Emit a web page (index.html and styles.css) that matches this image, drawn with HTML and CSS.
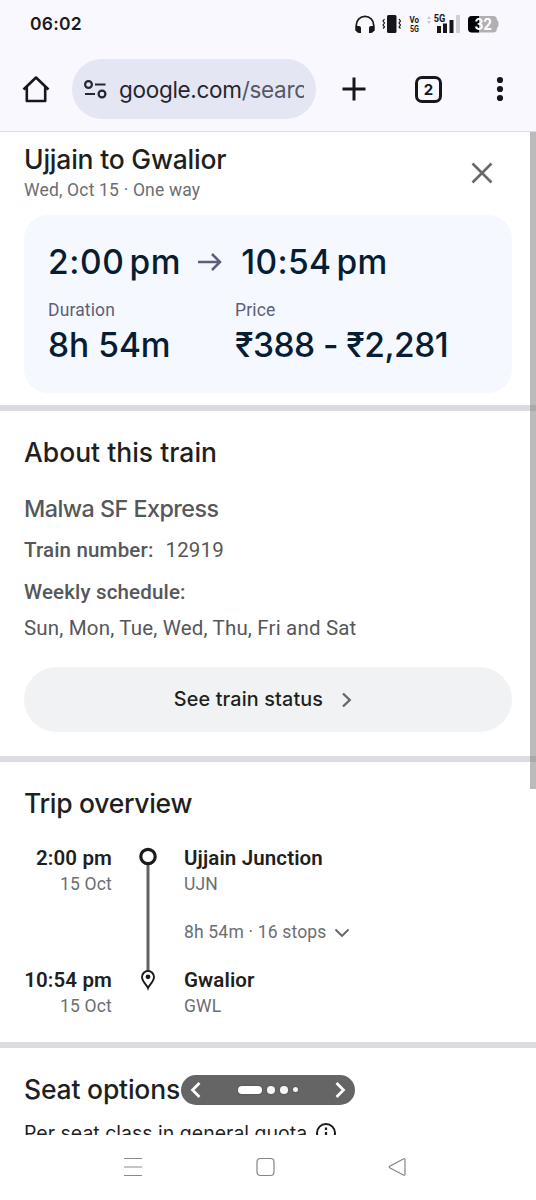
FILE: index.html
```html
<!DOCTYPE html>
<html lang="en">
<head>
<meta charset="utf-8">
<title>Ujjain to Gwalior</title>
<link rel="stylesheet" href="styles.css">
</head>
<body>
<div class="screen">
  <header class="chrome">
    <div class="status">
      <span class="clock">06:02</span>
      <svg class="status-icons" width="148" height="24" viewBox="0 0 148 24">
        <path d="M2.300 19v-6a8.700 8.700 0 0 1 17.400 0v6" fill="none" stroke="#16171b" stroke-width="1.700"/>
        <path d="M1.600 14H5q2 0 2 2v5H5q-3.400-1-3.400-4zM20.400 14H17q-2 0-2 2v5h2q3.400-1 3.400-4z" fill="#16171b"/>
        <rect x="33" y="3" width="9.500" height="18" rx="1.500" fill="#16171b"/>
        <path d="M30.500 7l-1.500 2 1.500 2-1.500 2 1.500 2-1.500 1.500M45 7l1.500 2-1.500 2 1.500 2-1.500 2 1.500 1.500" fill="none" stroke="#16171b" stroke-width="1.200"/>
        <text class="tiny" x="55.500" y="11" textLength="9.500" lengthAdjust="spacingAndGlyphs">Vo</text>
        <text class="tiny" x="56" y="20.300" textLength="9" lengthAdjust="spacingAndGlyphs">5G</text>
        <path d="M73 7l2-3 2 3zM73 9l2 3 2-3z" fill="#c8c7ce"/>
        <text class="tiny net" x="79.800" y="9.500" textLength="11.500" lengthAdjust="spacingAndGlyphs">5G</text>
        <path d="M83 14h4v7h-4zM89 11.500h4V21h-4zM95.500 8h4v13h-4z" fill="#16171b"/>
        <path d="M102 3h4v18h-4z" fill="#cfcfd5"/>
        <path d="M118 4h21q4 0 4 4l1.500 2v4l-1.500 2q0 4.500-4 4.500h-21q-4 0-4-4V8q0-4 4-4z" fill="#b1afb5"/>
        <path d="M125 4h-7q-4 0-4 4v8.500q0 4 4 4h7z" fill="#000"/>
        <text class="battery" x="120.500" y="17.800" textLength="17.500" lengthAdjust="spacingAndGlyphs">32</text>
      </svg>
    </div>
    <div class="toolbar">
      <svg class="home" width="28" height="28" viewBox="0 0 28 28"><path d="M1.500 14.500L14 2.500l12.500 12M4.800 12v14h18.400V12" fill="none" stroke="#16171b" stroke-width="2.600" stroke-linejoin="round"/></svg>
      <div class="address">
        <svg width="24" height="20" viewBox="0 0 24 20" fill="none" stroke="#25262f" stroke-width="2.200"><circle cx="5.500" cy="4.500" r="3.400"/><path d="M12 4.500h10.500M2 14h10"/><circle cx="19" cy="14" r="3.400"/></svg>
        <span class="url">google.com<span class="path">/searc</span></span>
      </div>
      <svg class="plus" width="24" height="24" viewBox="0 0 24 24"><path d="M12 .5v23M.5 12h23" stroke="#16171b" stroke-width="3"/></svg>
      <span class="tabs">2</span>
      <svg class="more" width="8" height="26" viewBox="0 0 8 26" fill="#16171b"><circle cx="4" cy="4" r="3.100"/><circle cx="4" cy="13" r="3.100"/><circle cx="4" cy="22" r="3.100"/></svg>
    </div>
  </header>

  <main class="page">
    <section class="summary">
      <div class="summary-head">
        <div>
          <h1 class="heading route">Ujjain to Gwalior</h1>
          <p class="meta">Wed, Oct 15 · One way</p>
        </div>
        <svg class="close" width="24" height="24" viewBox="0 0 24 24"><path d="M2.500 2.500l19 19M21.500 2.500l-19 19" stroke="#666a6d" stroke-width="2.600"/></svg>
      </div>
      <div class="card">
        <div class="times">
          <span class="big depart">2:00<span class="ampm">pm</span></span>
          <svg width="26" height="20" viewBox="0 0 26 20"><path d="M1 10h22M15 2l8 8-8 8" fill="none" stroke="#5b5d7b" stroke-width="2.500"/></svg>
          <span class="big arrive">10:54<span class="ampm">pm</span></span>
        </div>
        <div class="facts">
          <div><p class="label">Duration</p><p class="big duration">8h 54m</p></div>
          <div><p class="label">Price</p><p class="big price">₹388 - ₹2,281</p></div>
        </div>
      </div>
    </section>

    <section class="about">
      <h2 class="heading">About this train</h2>
      <h3 class="train">Malwa SF Express</h3>
      <p class="detail"><b>Train number:</b><span class="number">12919</span></p>
      <p class="detail"><b>Weekly schedule:</b></p>
      <p class="detail days">Sun, Mon, Tue, Wed, Thu, Fri and Sat</p>
      <div class="button"><span>See train status</span><svg width="12" height="18" viewBox="0 0 12 18"><path d="M2 2.500L8.700 9 2 15.500" fill="none" stroke="#66696c" stroke-width="2.400"/></svg></div>
    </section>

    <section class="trip">
      <h2 class="heading trip-title">Trip overview</h2>
      <div class="journey">
        <div class="when">
          <p class="stop">2:00 pm</p><p class="meta">15 Oct</p>
          <p class="stop second">10:54 pm</p><p class="meta">15 Oct</p>
        </div>
        <svg width="20" height="150" viewBox="0 0 20 150"><path d="M10 20v107" stroke="#626262" stroke-width="3"/><circle cx="10" cy="12.500" r="7.200" fill="#fff" stroke="#1b1b1d" stroke-width="3.200"/><path d="M10 144c-1-3-6-6.500-6-11a6 6 0 0 1 12 0c0 4.500-5 8-6 11z" fill="#fff" stroke="#1b1b1d" stroke-width="1.900"/><circle cx="10" cy="132.800" r="2.400" fill="#1b1b1d"/></svg>
        <div class="where">
          <p class="stop">Ujjain Junction</p><p class="meta">UJN</p>
          <p class="meta stops">8h 54m · 16 stops <svg width="16" height="10" viewBox="0 0 16 10"><path d="M1.500 1.500L8 8l6.500-6.500" fill="none" stroke="#626467" stroke-width="1.900"/></svg></p>
          <p class="stop">Gwalior</p><p class="meta">GWL</p>
        </div>
      </div>
    </section>

    <section class="seats">
      <h2 class="heading seats-title">Seat options</h2>
      <p class="quota">Per seat class in general quota <svg width="22" height="22" viewBox="0 0 22 22"><circle cx="11" cy="11" r="9" fill="none" stroke="#1b1b1d" stroke-width="2"/><path d="M11 5.500v2.400M11 10v6" stroke="#1b1b1d" stroke-width="2.200"/></svg></p>
    </section>
    <div class="scrollbar"></div>
    <div class="pager">
      <svg width="12" height="18" viewBox="0 0 12 18"><path d="M9.500 2l-7 7 7 7" fill="none" stroke="#fff" stroke-width="2.700"/></svg>
      <div class="dots"><i class="current"></i><i></i><i></i><i class="small"></i></div>
      <svg width="12" height="18" viewBox="0 0 12 18"><path d="M2.500 2l7 7-7 7" fill="none" stroke="#fff" stroke-width="2.700"/></svg>
    </div>
  </main>

  <nav class="navbar">
    <svg width="20" height="20" viewBox="0 0 20 20"><path d="M1 1.500h18M1 10h18M1 18.500h18" stroke="#8b8b8b" stroke-width="1.200"/></svg>
    <svg width="20" height="20" viewBox="0 0 20 20"><rect x="2" y="1.500" width="17" height="17" rx="3.500" fill="none" stroke="#858585" stroke-width="1.200"/></svg>
    <svg width="20" height="20" viewBox="0 0 20 20"><path d="M16.800 1.800L2.700 9.200q-1 .8 0 1.600l14.100 7.400q1.200.3 1.200-1V2.800q0-1.300-1.200-1z" fill="none" stroke="#858585" stroke-width="1.200"/></svg>
  </nav>
</div>
</body>
</html>
```
FILE: styles.css
```css
* { box-sizing: border-box; }
body { margin: 0; background: #fff; font-family: Roboto, sans-serif; }
h1, h2, h3, p { margin: 0; }
svg { display: block; flex: none; }
.screen { width: 536px; height: 1200px; display: flex; flex-direction: column; overflow: hidden; }

.chrome { height: 132px; flex: none; background: #faf8ff; border-bottom: 1px solid #dddce4; }
.status { height: 47px; display: flex; justify-content: space-between; padding: 12px 34px 0 30px; }
.clock { font: 600 17.500px/24px Inter, sans-serif; color: #1b1b20; letter-spacing: .25px; }
.tiny { font: 700 9.500px Roboto, sans-serif; fill: #16171b; }
.net { font-size: 10px; }
.battery { font: 700 15.500px Inter, sans-serif; fill: #fff; }
.toolbar { height: 84px; display: flex; align-items: center; padding-left: 22px; }
.address { width: 244px; height: 60px; margin-left: 22px; border-radius: 30px; background: #e4e6f3; display: flex; align-items: center; padding: 1px 12px 0 11px; gap: 12px; }
.url { width: 186px; overflow: hidden; white-space: nowrap; font: 400 22.500px/34px Inter, sans-serif; color: #25262f; letter-spacing: -.3px; padding-top: 1px; }
.path { color: #555866; }
.plus { margin-left: 26px; }
.tabs { width: 27px; height: 27px; margin-left: 49px; border: 3px solid #16171b; border-radius: 7px; font: 700 15px/21px Inter, sans-serif; text-align: center; color: #16171b; }
.more { margin-left: 54px; }

.page { position: relative; height: 1003px; flex: none; overflow: hidden; }
.heading { font: 500 26.500px/32px Inter, sans-serif; color: #1f1f1f; white-space: nowrap; }
.route { letter-spacing: -.22px; }
.meta { font-size: 17.500px; line-height: 24px; letter-spacing: .18px; color: #6c6e71; white-space: nowrap; }
.summary { height: 279px; padding: 11px 24px 0; border-bottom: 6px solid #dadce0; }
.summary-head { height: 71.500px; display: flex; justify-content: space-between; }
.summary-head .meta { margin-top: 3px; }
.close { margin: 18px 18px 0 0; }
.card { height: 178px; padding: 27px 24px; border-radius: 24px; background: #f5f8ff; }
.big { font: 500 33.500px/40px Inter, sans-serif; color: #061d33; white-space: nowrap; }
.depart { letter-spacing: .6px; }
.arrive { letter-spacing: .4px; margin-left: 18px; }
.times { display: flex; align-items: center; height: 40px; }
.times svg { margin-left: 16px; }
.ampm { margin-left: 5px; }
.price { letter-spacing: -.52px; }
.facts { display: grid; grid-template-columns: 187px 1fr; margin-top: 16px; }
.label { font-size: 17.500px; line-height: 24px; letter-spacing: .15px; color: #5e607a; margin-bottom: 3px; }

.about { height: 351px; padding: 25px 24px 0; border-bottom: 6px solid #dadce0; }
.train { margin-top: 25px; font: 500 23.300px/32px Inter, sans-serif; letter-spacing: -.52px; color: #55575a; white-space: nowrap; }
.detail { font-size: 20.500px; line-height: 28px; margin-top: 11px; letter-spacing: .17px; color: #55575a; white-space: nowrap; }
.detail b { font-weight: 500; }
.number { margin-left: 12px; }
.detail + .detail { margin-top: 14px; }
.detail + .days { margin-top: 8px; }
.button { height: 65px; margin-top: 25px; padding: 0 9px 2px 0; border-radius: 33px; background: #f1f2f4; display: flex; align-items: center; justify-content: center; gap: 18px; font: 500 19.800px/28px Inter, sans-serif; letter-spacing: .15px; color: #1f1f1f; }
.button svg { margin-top: 2px; }

.trip { height: 286px; padding: 25px 24px 0; border-bottom: 6px solid #dadce0; }
.trip-title { letter-spacing: -.3px; }
.journey { display: flex; margin-top: 25px; }
.when { width: 88px; text-align: right; margin-right: 26px; }
.where { margin-left: 26px; }
.stop { font-size: 20.500px; line-height: 28px; font-weight: 600; letter-spacing: .12px; color: #1f1f1f; white-space: nowrap; }
.second { margin-top: 70px; }
.stops { display: flex; align-items: center; gap: 7px; margin: 24px 0 22px; }
.stops svg { margin-top: 2px; }

.seats { padding: 25px 24px 0; }
.seats-title { letter-spacing: -.2px; }
.quota { display: flex; align-items: center; gap: 8px; margin-top: 14px; font: 400 19.500px/28px Inter, sans-serif; color: #1f1f1f; white-space: nowrap; }
.scrollbar { position: absolute; right: 0; top: 0; width: 6px; height: 657px; background: rgba(120, 120, 120, .5); }
.pager { position: absolute; left: 181px; top: 943px; width: 174px; height: 29.500px; border-radius: 15px; background: #656565; display: flex; align-items: center; justify-content: space-between; padding: 0 9px; }
.dots { display: flex; align-items: center; gap: 5.500px; }
.dots i { width: 7.500px; height: 7.500px; border-radius: 50%; background: #f5f5f5; box-shadow: 0 0 2px #444; }
.dots .current { width: 24px; height: 7.500px; border-radius: 4px; background: #fff; }
.dots .small { width: 5px; height: 5px; }

.navbar { height: 65px; flex: none; background: #fff; display: flex; align-items: flex-start; padding: 22px 0 0 123px; gap: 112px; }
```
